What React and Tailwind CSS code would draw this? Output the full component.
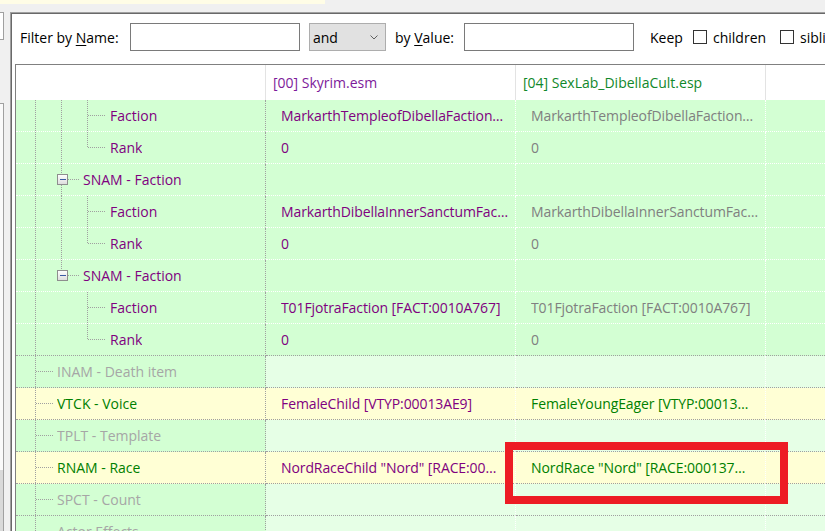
import { Fragment } from "react";

const G1 = "bg-[#d3ffd3]";
const G2 = "bg-[#e6ffe6]";
const YL = "bg-[#ffffd5]";

// tree guide: v19 / v45 / v71 = "full" | "top" | "split" ; conn = [x1, x2] ; box = show expander
const rows = [
    { label: "Faction", lvl: 2, tone: "sub", a: "MarkarthTempleofDibellaFaction…", b: "MarkarthTempleofDibellaFaction…", g: { v45: "full", v71: "full", conn: [72, 89] } },
    { label: "Rank", lvl: 2, tone: "sub", a: "0", b: "0", g: { v45: "full", v71: "top", conn: [72, 89] } },
    { label: "SNAM - Faction", lvl: 1, tone: "sub", a: "", b: "", g: { v45: "split", box: true, conn: [52, 63] } },
    { label: "Faction", lvl: 2, tone: "sub", a: "MarkarthDibellaInnerSanctumFac…", b: "MarkarthDibellaInnerSanctumFac…", g: { v45: "full", v71: "full", conn: [72, 89] } },
    { label: "Rank", lvl: 2, tone: "sub", a: "0", b: "0", g: { v45: "full", v71: "top", conn: [72, 89] } },
    { label: "SNAM - Faction", lvl: 1, tone: "sub", a: "", b: "", g: { v45: "topbox", box: true, conn: [52, 63] } },
    { label: "Faction", lvl: 2, tone: "sub", a: "T01FjotraFaction [FACT:0010A767]", b: "T01FjotraFaction [FACT:0010A767]", g: { v71: "full", conn: [72, 89] } },
    { label: "Rank", lvl: 2, tone: "sub", a: "0", b: "0", g: { v71: "top", conn: [72, 89] }, last: true },
    { label: "INAM - Death item", lvl: 0, tone: "off", a: "", b: "", g: { conn: [20, 37] } },
    { label: "VTCK - Voice", lvl: 0, tone: "diff", a: "FemaleChild [VTYP:00013AE9]", b: "FemaleYoungEager [VTYP:00013…", g: { conn: [20, 37] } },
    { label: "TPLT - Template", lvl: 0, tone: "off", a: "", b: "", g: { conn: [20, 37] } },
    { label: "RNAM - Race", lvl: 0, tone: "diff", a: "NordRaceChild \"Nord\" [RACE:00…", b: "NordRace \"Nord\" [RACE:000137…", g: { conn: [20, 37] } },
    { label: "SPCT - Count", lvl: 0, tone: "off", a: "", b: "", g: { conn: [20, 37] } },
    { label: "Actor Effects", lvl: 0, tone: "off", a: "", b: "", g: { conn: [20, 37] } },
];

const indent = { 0: 41, 1: 67, 2: 94 };

function Guides({ g, w }) {
    const dot = { stroke: "#a0a0a0", strokeDasharray: "1 1", shapeRendering: "crispEdges" };
    const vline = (x, kind) => {
        if (!kind) return null;
        if (kind === "full") return <line x1={x} y1={0} x2={x} y2={32} {...dot} />;
        if (kind === "top") return <line x1={x} y1={0} x2={x} y2={16} {...dot} />;
        if (kind === "topbox") return <line x1={x} y1={0} x2={x} y2={10} {...dot} />;
        return (
            <>
                <line x1={x} y1={0} x2={x} y2={10} {...dot} />
                <line x1={x} y1={21} x2={x} y2={32} {...dot} />
            </>
        );
    };
    return (
        <svg width={w} height={31} className="shrink-0 overflow-visible">
            {vline(19.5, "full")}
            {vline(45.5, g.v45)}
            {vline(71.5, g.v71)}
            <line x1={g.conn[0]} y1={15.5} x2={g.conn[1]} y2={15.5} {...dot} />
            {g.box && (
                <>
                    <defs>
                        <linearGradient id="exp" x1="0" y1="0" x2="0" y2="1">
                            <stop offset="0" stopColor="#ffffff" />
                            <stop offset="1" stopColor="#dcdcdc" />
                        </linearGradient>
                    </defs>
                    <rect x={41.5} y={10.5} width={10} height={10} fill="url(#exp)" stroke="#8e8e8e" shapeRendering="crispEdges" />
                    <line x1={44} y1={15.5} x2={50} y2={15.5} stroke="#3b5aa3" shapeRendering="crispEdges" />
                </>
            )}
        </svg>
    );
}

function Row({ r }) {
    const white = r.tone === "sub" && !r.last;
    const sep = white ? "border-b border-dotted border-b-white" : "border-b border-dotted border-b-[#a0a0a0]";
    const c1 = r.tone === "diff" ? YL : G1;
    const cx = r.tone === "diff" ? YL : r.tone === "off" ? G2 : G1;
    const labelColor = r.tone === "sub" ? "text-[#800080]" : r.tone === "diff" ? "text-[#008000]" : "text-[#a6a6a6]";
    const bColor = r.tone === "diff" ? "text-[#008000]" : "text-[#808080]";

    return (
        <div className="flex h-[32px] shrink-0">
            <div className={`flex w-[250px] shrink-0 items-center border-r border-dotted border-r-[#a0a0a0] ${sep} ${c1}`}>
                <Guides g={r.g} w={indent[r.lvl]} />
                <span className={`truncate ${labelColor}`}>{r.label}</span>
            </div>
            <div className={`flex w-[250px] shrink-0 items-center border-r border-dotted border-r-white pl-[15px] ${sep} ${cx}`}>
                <span className="truncate tracking-[-0.1px] text-[#800080]">{r.a}</span>
            </div>
            <div className={`flex w-[250px] shrink-0 items-center border-r border-dotted border-r-white pl-[15px] ${sep} ${cx}`}>
                <span className={`truncate tracking-[-0.1px] ${bColor}`}>{r.b}</span>
            </div>
            <div className={`flex-1 ${sep} ${cx}`} />
        </div>
    );
}

function Check() {
    return <span className="h-[14px] w-[14px] shrink-0 border border-[#333333] bg-white" />;
}

export default function App() {
    return (
        <div className="relative flex h-[531px] w-[825px] flex-col overflow-hidden bg-[#f0f0f0] font-['Open_Sans','Noto_Sans',sans-serif] text-[14px] text-black">
            <div className="h-[4px] w-[325px] shrink-0 bg-[#fffde6]" />

            <div className="mt-[8px] flex min-h-0 flex-1">
                {/* left panel edge */}
                <div className="flex w-[10px] shrink-0 flex-col">
                    <div className="h-[28px] w-[4px] border-y border-r border-[#a0a0a0] bg-white" />
                    <div className="mt-[63px] flex w-[4px] flex-1 flex-col border-t border-r border-[#a0a0a0]">
                        <div className="flex-1 bg-[#fafafa]" />
                        <div className="h-[61px] bg-[#d9d9d9]" />
                    </div>
                </div>

                {/* record view */}
                <div className="flex min-w-0 flex-1 flex-col border-l border-t border-[#a0a0a0]">
                    <div className="flex min-h-0 flex-1 flex-col border-l border-t border-[#696969] bg-white">
                        <div className="flex h-[50px] shrink-0 items-start overflow-hidden whitespace-nowrap pt-[9px]">
                            <div className="ml-[8px] flex h-[28px] w-[110px] shrink-0 items-center">
                                Filter by&nbsp;<span className="underline underline-offset-2">N</span>ame:
                            </div>
                            <div className="h-[28px] w-[170px] shrink-0 border border-[#7a7a7a] bg-white" />
                            <div className="ml-[9px] flex h-[28px] w-[77px] shrink-0 items-center justify-between border border-[#adadad] bg-[#e1e1e1] pl-[3px] pr-[7px]">
                                <span>and</span>
                                <svg width="8" height="5" viewBox="0 0 8 5">
                                    <polyline points="0.5,0.5 4,4 7.5,0.5" fill="none" stroke="#606060" strokeWidth="1" />
                                </svg>
                            </div>
                            <div className="ml-[9px] flex h-[28px] w-[69px] shrink-0 items-center">
                                by&nbsp;<span className="underline underline-offset-2">V</span>alue:
                            </div>
                            <div className="h-[28px] w-[170px] shrink-0 border border-[#7a7a7a] bg-white" />
                            <div className="ml-[16px] flex h-[28px] w-[43px] shrink-0 items-center">Keep</div>
                            <div className="flex h-[28px] shrink-0 items-center gap-[6px]">
                                <Check />
                                <span className="w-[61px]">children</span>
                                <Check />
                                <span>siblings</span>
                            </div>
                        </div>

                        <div className="ml-[3px] flex min-h-0 flex-1 flex-col overflow-hidden border-l border-t border-[#808080]">
                            <div className="flex h-[35px] shrink-0 bg-white">
                                <div className="w-[250px] shrink-0 border-r border-[#e3e3e3]" />
                                <div className="flex w-[250px] shrink-0 items-center border-r border-[#e3e3e3] pl-[7px] text-[#7d1a9a]">
                                    [00] Skyrim.esm
                                </div>
                                <div className="flex w-[250px] shrink-0 items-center border-r border-[#e3e3e3] pl-[7px] text-[#10882a]">
                                    [04] SexLab_DibellaCult.esp
                                </div>
                                <div className="flex-1" />
                            </div>
                            {rows.map((r, i) => (
                                <Fragment key={i}>
                                    <Row r={r} />
                                </Fragment>
                            ))}
                        </div>
                    </div>
                </div>
            </div>

            {/* annotation */}
            <div className="absolute left-[505px] top-[442px] h-[62px] w-[283px] border-[8px] border-[#ed1c24]" />
        </div>
    );
}
